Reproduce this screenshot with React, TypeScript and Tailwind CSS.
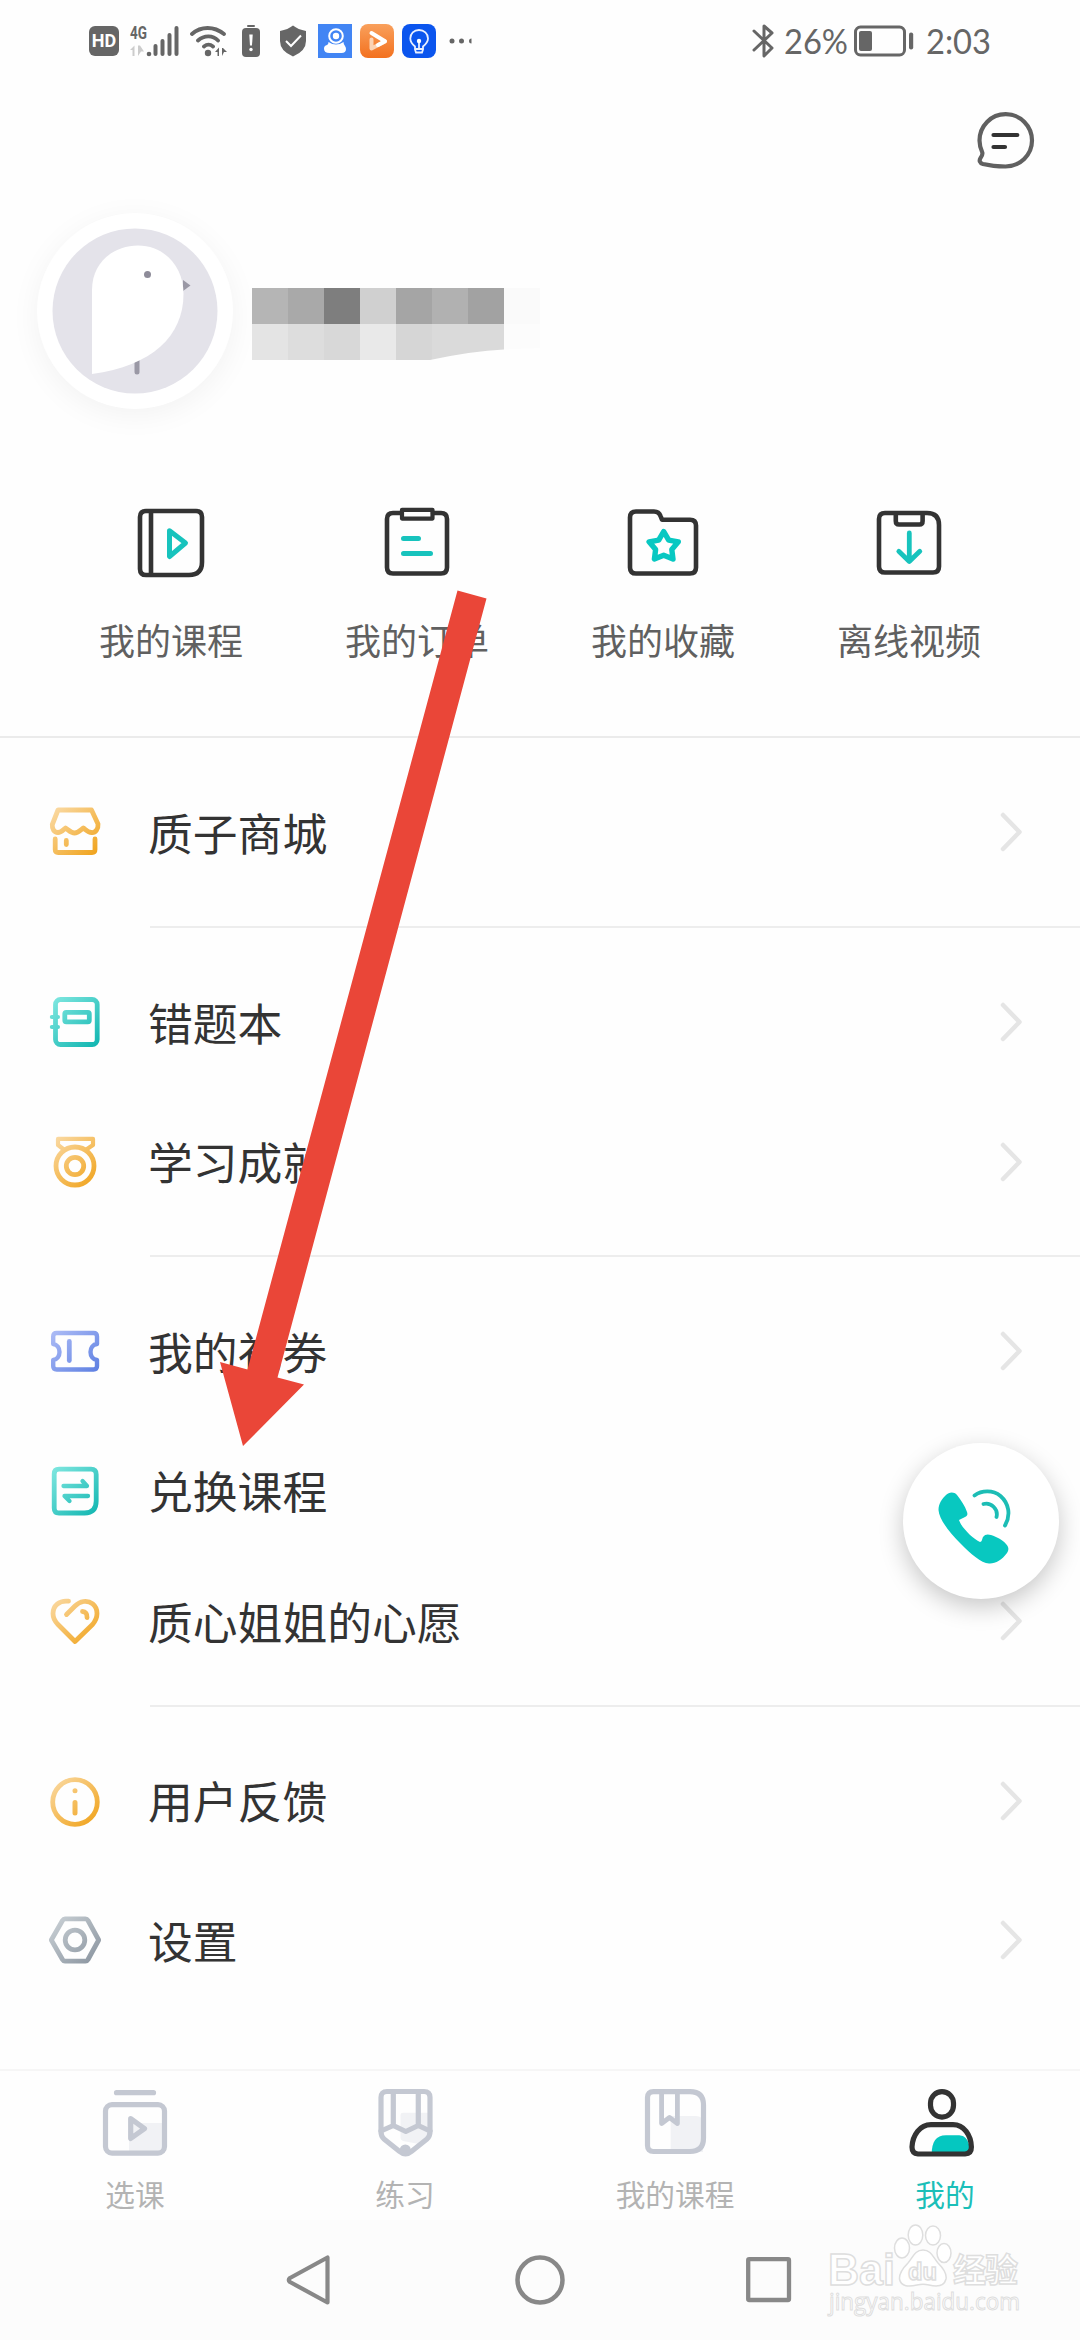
import React from 'react';

type IconProps = { className?: string };

const shade = (id: string, from: string, to: string) => (
  <defs>
    <linearGradient id={id} gradientUnits="userSpaceOnUse" x1="6" y1="4" x2="48" y2="50">
      <stop offset="0" stopColor={from} />
      <stop offset="1" stopColor={to} />
    </linearGradient>
  </defs>
);

const RowSvg: React.FC<{ id: string; from: string; to: string; children: React.ReactNode }> = ({ id, from, to, children }) => (
  <svg viewBox="0 0 54 54" className="w-[54px] h-[54px] shrink-0" fill="none" stroke={`url(#${id})`} strokeWidth="4.800" strokeLinecap="round" strokeLinejoin="round">
    {shade(id, from, to)}
    {children}
  </svg>
);

const orange = { from: '#fad9a2', to: '#f0a31c' };
const teal = { from: '#7de6df', to: '#14b7b2' };
const blue = { from: '#aebdf6', to: '#5d7fe2' };
const grey = { from: '#c9d0d5', to: '#8b95a0' };

const StoreIcon = () => (
  <RowSvg id="store" {...orange}>
    <path d="M10 5H43.500L50 19C50.500 24 47.500 28 43.500 27.500C40 27.500 38 25 35.300 23C32.500 25 30 28 26.500 28C23 28 20.500 25 17.500 23C15 25 13 27.500 10 27.500C6 27.500 4 24 4.300 19.500Z" />
    <path d="M7.200 34V44.500Q7.200 47.500 10.200 47.500H44Q47 47.500 47 44.500V34M18.300 35.500V39.500" />
  </RowSvg>
);

const NotebookIcon = () => (
  <RowSvg id="notebook" {...teal}>
    <rect x="7.500" y="4.500" width="41.700" height="45" rx="5" />
    <rect x="16.800" y="17.300" width="24.500" height="9.500" rx="1.500" />
    <path d="M3.800 22H10M3.800 32H10" strokeWidth="4" />
  </RowSvg>
);

const MedalIcon = () => (
  <RowSvg id="medal" {...orange}>
    <path d="M16.500 15L10 10V3.900H45V10L37.500 15" strokeWidth="4.200" />
    <circle cx="27" cy="31" r="19" />
    <circle cx="27" cy="31" r="8.700" />
  </RowSvg>
);

const TicketIcon = () => (
  <RowSvg id="ticket" {...blue}>
    <path d="M5.200 20V12.500Q5.200 9 8.700 9H45.500Q49 9 49 12.500V20C45 20.500 42.500 24 42.500 28C42.500 32 45 35.500 49 36V42Q49 45.500 45.500 45.500H8.700Q5.200 45.500 5.200 42V36C9 35.500 11.500 32 11.500 28C11.500 24 9 20.500 5.200 20Z" strokeWidth="4.400" />
    <path d="M21.300 17.500V36.500" />
  </RowSvg>
);

const ExchangeIcon = () => (
  <RowSvg id="exchange" {...teal}>
    <path d="M11 5.200H43Q48.200 5.200 48.200 10.400V37Q48.200 49 36.500 49H11Q6.200 49 6.200 44V10Q6.200 5.200 11 5.200Z" />
    <path d="M15.500 22H39L34.500 17M40 32H16.500L21.500 37" strokeWidth="4.300" />
  </RowSvg>
);

const HeartIcon = () => (
  <RowSvg id="heart" {...orange}>
    <path d="M20.500 7.200C11 6 5 12 5 19.500C5 24 7 27.500 10 30.500L27 47.500L44.500 30.500C47 27.500 49 24 49 19.500C49 11 42 6.500 35.500 7.500C32 8 29.500 9.500 27 12L18.500 20.500" />
    <path d="M34.500 17.500C37.500 17.500 39.300 20 39 23.500" />
  </RowSvg>
);

const InfoIcon = () => (
  <RowSvg id="info" {...orange}>
    <circle cx="27" cy="28" r="22.300" />
    <path d="M27 28.500V39M27 16.700V16.800" strokeWidth="5" />
  </RowSvg>
);

const SettingsIcon = () => (
  <RowSvg id="settings" {...grey}>
    <path d="M3.300 27L14.500 7.500Q15.500 5.900 17 5.900H37.500Q39 5.900 40 7.500L50.700 27L40 46.500Q39 48.200 37.500 48.200H17Q15.500 48.200 14.500 46.500Z" />
    <circle cx="27" cy="27" r="9.800" />
  </RowSvg>
);

const ShortcutSvg: React.FC<{ children: React.ReactNode }> = ({ children }) => (
  <svg viewBox="0 0 72 72" className="w-[72px] h-[72px]" fill="none" stroke="#333" strokeWidth="4.600" strokeLinecap="round" strokeLinejoin="round">
    {children}
  </svg>
);

const CourseIcon = () => (
  <ShortcutSvg>
    <path d="M11 4H61Q67 4 67 10V55Q67 68 54 68H11Q5 68 5 62V10Q5 4 11 4ZM16 4V68" />
    <path d="M34.500 23.700L50.500 36L34.500 49.500Z" stroke="#17c3bd" strokeWidth="5" />
  </ShortcutSvg>
);

const OrderIcon = () => (
  <ShortcutSvg>
    <path d="M20 6H12Q6 6 6 12V60.500Q6 66.500 12 66.500H60Q66 66.500 66 60.500V12Q66 6 60 6H52" />
    <rect x="21" y="2.900" width="30.500" height="8.700" strokeWidth="4.200" />
    <path d="M22.500 31.400H37.500M22.500 46.400H49.500" stroke="#17c3bd" strokeWidth="5" />
  </ShortcutSvg>
);

const FavoriteIcon = () => (
  <ShortcutSvg>
    <path d="M9 4.500H27Q32 4.500 33.500 9L35 12.700H63Q69 12.700 69 18.500V60.500Q69 66.500 63 66.500H9Q3 66.500 3 60.500V10.500Q3 4.500 9 4.500Z" />
    <path d="M36.700 24.500L41.700 33.100L51.300 34.800L44.800 42.600L46 52L36.700 48.300L27.400 52L28.600 42.600L22.100 34.800L31.700 33.100Z" stroke="#08c8c2" strokeWidth="5.400" />
  </ShortcutSvg>
);

const OfflineIcon = () => (
  <ShortcutSvg>
    <path d="M12 6H54Q66 6 66 18V59.500Q66 65.500 60 65.500H12Q6 65.500 6 59.500V12Q6 6 12 6ZM22.800 6V14Q22.800 17.500 26 17.500H46.500Q49.600 17.500 49.600 14V6" />
    <path d="M36.300 26V54.500M25.800 44.300L36.300 54.500L46.800 44.300" stroke="#17c3bd" strokeWidth="4.800" />
  </ShortcutSvg>
);

const TabSvg: React.FC<{ color: string; children: React.ReactNode }> = ({ color, children }) => (
  <svg viewBox="0 0 72 72" className="w-[72px] h-[72px]" fill="none" stroke={color} strokeWidth="5.200" strokeLinecap="round" strokeLinejoin="round">
    {children}
  </svg>
);

const PickTabIcon = () => (
  <TabSvg color="#c4c8d2">
    <path d="M30 36H66V66H30Z" fill="#f1f2f5" stroke="none" />
    <path d="M17.500 5.700H54.500" />
    <rect x="6.500" y="17.600" width="59" height="48.500" rx="6.500" />
    <path d="M31.700 31.700L45.500 41.700L31.700 51.500Z" fill="#f1f2f5" />
  </TabSvg>
);

const PracticeTabIcon = () => (
  <TabSvg color="#c4c8d2">
    <path d="M31.500 28Q31.500 25.700 34 25.700H61V48L50 57L34 54Q31.500 53 31.500 51Z" fill="#f1f2f5" stroke="none" />
    <path d="M18 4.500H55Q61 4.500 61 10.500V45Q61 49 58 52L43 64Q36.500 69.500 30 64L15 52Q12 49 12 45V10.500Q12 4.500 18 4.500Z" />
    <path d="M24.300 5V38M49.300 5V38M12 44L24.300 38.500L36.800 44.500L49.300 38.500L61 44" />
    <circle cx="36.300" cy="63" r="5.500" fill="#c4c8d2" stroke="none" />
  </TabSvg>
);

const CourseTabIcon = () => (
  <TabSvg color="#c4c8d2">
    <path d="M31.700 29H57Q64 29 64 36V65H31.700Z" fill="#f1f2f5" stroke="none" />
    <path d="M14.500 4.600H51Q64.500 4.600 64.500 18V51Q64.500 64.500 51 64.500H14.500Q8.500 64.500 8.500 58.500V10.600Q8.500 4.600 14.500 4.600Z" />
    <path d="M22.600 5V36.500L30.500 30.500L38.400 36.500V5" strokeWidth="4.800" />
  </TabSvg>
);

const MineTabIcon = () => (
  <TabSvg color="#333">
    <path d="M22.700 67C22.700 55 27 48.300 37 48.300H49C56 48.300 60 52 62 67Z" fill="#05c7c0" stroke="none" />
    <rect x="21.500" y="4.600" width="23" height="25.500" rx="11.500" />
    <path d="M9 67Q3 66.500 3 60C3.500 48 11 37.600 22 37.600H44C55 37.600 62 48 62.400 60Q62.500 66.500 56 67Z" />
  </TabSvg>
);

const ChevronRight: React.FC<IconProps> = ({ className }) => (
  <svg viewBox="0 0 24 42" className={className} fill="none" stroke="#e5e5e5" strokeWidth="4.500" strokeLinecap="round" strokeLinejoin="round">
    <path d="M4 4L20.500 21L4 38" />
  </svg>
);

const shortcuts = [
  { label: '我的课程', icon: CourseIcon },
  { label: '我的订单', icon: OrderIcon },
  { label: '我的收藏', icon: FavoriteIcon },
  { label: '离线视频', icon: OfflineIcon },
];

const menu = [
  { pad: 'py-6', items: [{ label: '质子商城', icon: StoreIcon, height: 'h-[140px]' }] },
  {
    pad: 'py-6',
    items: [
      { label: '错题本', icon: NotebookIcon, height: 'h-[140px]' },
      { label: '学习成就', icon: MedalIcon, height: 'h-[139px]' },
    ],
  },
  {
    pad: 'pt-6 pb-[23px]',
    items: [
      { label: '我的礼券', icon: TicketIcon, height: 'h-[140px]' },
      { label: '兑换课程', icon: ExchangeIcon, height: 'h-[139px]' },
      { label: '质心姐姐的心愿', icon: HeartIcon, height: 'h-[122px]' },
    ],
  },
  {
    pad: 'py-6',
    items: [
      { label: '用户反馈', icon: InfoIcon, height: 'h-[139px]' },
      { label: '设置', icon: SettingsIcon, height: 'h-[140px]' },
    ],
  },
];

const tabs = [
  { label: '选课', icon: PickTabIcon, active: false },
  { label: '练习', icon: PracticeTabIcon, active: false },
  { label: '我的课程', icon: CourseTabIcon, active: false },
  { label: '我的', icon: MineTabIcon, active: true },
];

const StatusBar = () => (
  <div className="h-20 pl-[89px] pr-[88px] pt-0.5 flex items-center justify-between text-[#666]">
    <div className="flex items-center">
      <div className="w-[30px] h-[30px] rounded-md bg-[#666] text-white font-['Roboto'] font-bold text-[18px] leading-none flex items-center justify-center">
        HD
      </div>
      <svg viewBox="0 0 50 32" className="ml-[11px] w-[50px] h-8 overflow-visible" fill="#666">
        <text x="0" y="14" fontFamily="Roboto, sans-serif" fontWeight="700" fontSize="18" textLength="17" lengthAdjust="spacingAndGlyphs">4G</text>
        <path d="M0 25L4.500 20.500V31H2.500V25ZM8 20.500H10L14 26.500H11L8 31Z" fill="#ccc" />
        <circle cx="19" cy="29" r="2.300" />
        <rect x="23.500" y="19" width="4" height="12" rx="2" />
        <rect x="30.500" y="14" width="4" height="17" rx="2" />
        <rect x="37.500" y="8" width="4" height="23" rx="2" />
        <rect x="44.500" y="1" width="4" height="30" rx="2" />
      </svg>
      <svg viewBox="0 0 38 32" className="ml-2.5 w-[38px] h-8" fill="none" stroke="#666" strokeWidth="3.800" strokeLinecap="round">
        <path d="M2 9C11 1 24 1 34 9M8 15.500C14 10 23 10 28 15.500M14 21.500C17 19 20 19 23 21.500" />
        <circle cx="18" cy="28" r="3.200" fill="#666" stroke="none" />
        <path d="M25 27L29 22.500V31H27.500V27ZM32 23H33L37 27H34L32 31Z" fill="#666" stroke="none" />
      </svg>
      <svg viewBox="0 0 18 32" className="ml-3.5 w-[18px] h-8" fill="#666">
        <rect x="5" y="0" width="8" height="2" rx="1" />
        <rect x="0" y="3" width="18" height="29" rx="4" />
        <path d="M7.300 9.500H10.700L10 20.500H8Z" fill="#fff" />
        <circle cx="9" cy="24.500" r="1.700" fill="#fff" />
      </svg>
      <svg viewBox="0 0 26 32" className="ml-5 w-[26px] h-8">
        <path d="M13 0.500Q18 4.500 26 6V16Q26 26 13 31.500Q0 26 0 16V6Q8 4.500 13 0.500Z" fill="#666" />
        <path d="M6 16L11 21L21 10.500" fill="none" stroke="#fff" strokeWidth="2" />
      </svg>
      <svg viewBox="0 0 34 34" className="ml-3 w-[34px] h-[34px]">
        <path d="M0 0H34V34H0Z" fill="#4285f4" />
        <circle cx="18" cy="12" r="6.800" fill="none" stroke="#fff" strokeWidth="2" />
        <circle cx="18" cy="12" r="3.200" fill="#fff" />
        <path d="M10.500 18Q18 23 25.500 18Q25.500 20.500 27 22Q28 23.500 28 25Q28 29 23.500 29H11.500Q6 29 6 24.800Q6 21.500 9 21Q10.500 20.500 10.500 18Z" fill="#fff" />
      </svg>
      <svg viewBox="0 0 34 34" className="ml-2 w-[34px] h-[34px]">
        <defs>
          <linearGradient id="video" x1="0" y1="0" x2="0" y2="1">
            <stop offset="0" stopColor="#f9a05c" />
            <stop offset="1" stopColor="#f3711f" />
          </linearGradient>
        </defs>
        <rect width="34" height="34" rx="8" fill="url(#video)" />
        <path d="M11.500 15.500V24.500L25 17.500" fill="none" stroke="#fbd3b4" strokeWidth="4" strokeLinecap="round" strokeLinejoin="round" />
        <path d="M11.500 9L25 17.200L18 21" fill="none" stroke="#fff" strokeWidth="4" strokeLinecap="round" strokeLinejoin="round" />
      </svg>
      <svg viewBox="0 0 34 34" className="ml-2 w-[34px] h-[34px]" fill="none" stroke="#e8efff" strokeWidth="1.800">
        <rect width="34" height="34" rx="8" fill="#0b55ee" stroke="none" />
        <path d="M13 25V22.500C10 20 8.300 18 8.300 14.500C8.300 9.500 12 6 17 6S26 9.500 26 14.500C26 18 24 20 21 22.500V25ZM13 25.500L14 28.500H20L21 25.500M17 17V24" />
        <circle cx="17" cy="17" r="2.200" fill="#fff" stroke="none" />
      </svg>
      <svg viewBox="0 0 24 6" className="ml-[13px] w-6 h-1.5" fill="#666">
        <circle cx="3" cy="3" r="2.500" />
        <circle cx="12.500" cy="3" r="2.500" />
        <path d="M22.500 0.500V5.500A2.500 2.500 0 0 1 22.500 0.500Z" />
      </svg>
    </div>

    <div className="flex items-center">
      <svg viewBox="0 0 22 34" className="w-[22px] h-[34px]" fill="none" stroke="#666" strokeWidth="3" strokeLinejoin="round" strokeLinecap="round">
        <path d="M2 7L20 24L12 32V2L20 9L2 26" />
      </svg>
      <svg viewBox="0 0 64 34" className="ml-2.5 w-16 h-[34px] overflow-visible" fill="#666">
        <text x="0" y="30" fontFamily="Lato, sans-serif" fontSize="35" textLength="64" lengthAdjust="spacingAndGlyphs">26%</text>
      </svg>
      <svg viewBox="0 0 60 32" className="ml-[6px] w-[60px] h-8" fill="none" stroke="#666">
        <rect x="1.500" y="2" width="49" height="28" rx="5" strokeWidth="3" />
        <rect x="5" y="6" width="13" height="20" rx="2" fill="#666" stroke="none" />
        <rect x="55" y="7.500" width="4.200" height="17" rx="2" fill="#666" stroke="none" />
      </svg>
      <svg viewBox="0 0 66 34" className="ml-3 w-[66px] h-[34px] overflow-visible" fill="#666">
        <text x="0" y="30" fontFamily="Lato, sans-serif" fontSize="35" textLength="65" lengthAdjust="spacingAndGlyphs">2:03</text>
      </svg>
    </div>
  </div>
);

const Avatar = () => (
  <div className="w-[196px] h-[196px] rounded-full bg-white shadow-[0_6px_30px_rgba(0,0,0,0.05)] flex items-center justify-center">
    <svg viewBox="0 0 166 166" className="w-[166px] h-[166px]">
      <circle cx="83" cy="83" r="82.500" fill="#e4e3ea" />
      <path d="M85 125V144" stroke="#9a98a5" strokeWidth="5" strokeLinecap="round" />
      <path d="M131 52L138.500 57.500L131 63Z" fill="#9a98a5" />
      <path d="M40 146V62C40 34 62 17.500 86 17.500C112 17.500 131.500 38 131.500 66C131.500 108 100 138 40 146Z" fill="#fff" />
      <circle cx="95.500" cy="46.500" r="3.500" fill="#8e8c99" />
    </svg>
  </div>
);

const topTiles = ['#b5b5b5', '#a9a9a9', '#7e7e7e', '#d0d0d0', '#a5a5a5', '#b1b1b1', '#a2a2a2', '#fafafa'];
const bottomTiles = ['#e4e4e4', '#dddddd', '#d8d8d8', '#e9e9e9', '#d6d6d6', '#dadada', '#dadada', '#fcfcfc'];

const MaskedName = () => (
  <svg viewBox="0 0 288 72" className="w-[288px] h-[72px]" shapeRendering="crispEdges">
    {topTiles.map((c, i) => (
      <rect key={i} x={i * 36} y="0" width="36" height="36" fill={c} />
    ))}
    {bottomTiles.map((c, i) => (
      <rect key={i} x={i * 36} y="36" width="36" height="36" fill={c} />
    ))}
    <path d="M178 72Q220 63 252 61.500L288 60V72Z" fill="#fefefe" shapeRendering="auto" />
  </svg>
);

const App: React.FC = () => {
  return (
    <div className="relative w-[1080px] h-[2340px] overflow-hidden bg-[#fefefe] flex flex-col font-['Noto_Sans_CJK_SC',sans-serif]">
      <StatusBar />

      {/* Messages */}
      <div className="h-[133px] pt-[30px] pr-[45px] flex justify-end">
        <svg viewBox="0 0 60 60" className="w-[60px] h-[60px]" fill="none" stroke="#606060" strokeWidth="4.200" strokeLinecap="round" strokeLinejoin="round">
          <path d="M7.300 42.500C5.500 38.500 4.500 35 4.500 30.500C4.500 16 16 4.200 30.700 4.200S57 16 57 30.500S45 56.500 30.500 56.500C22 56.500 14 55.500 8 54C4.500 53 4 50.500 5.500 48C7 46 7.800 44.500 7.300 42.500Z" />
          <path d="M18.500 25H42.300M18.500 37H30" stroke="#333" />
        </svg>
      </div>

      {/* Profile */}
      <div className="h-[294px] pl-[37px] flex items-start">
        <Avatar />
        <div className="ml-[19px] pt-[75px]">
          <MaskedName />
        </div>
      </div>

      {/* Shortcuts */}
      <div className="h-[231px] px-12 grid grid-cols-4 border-b-2 border-[#ebebeb]">
        {shortcuts.map((item) => (
          <div key={item.label} className="flex flex-col items-center">
            <item.icon />
            <span className="mt-[33px] text-4xl leading-[54px] text-[#606060]">{item.label}</span>
          </div>
        ))}
      </div>

      {/* Menu */}
      <div className="h-[1331px]">
        {menu.map((group, index) => (
          <React.Fragment key={index}>
            {index > 0 && <div className="ml-[150px] h-0.5 bg-[#ededed]"></div>}
            <div className={group.pad}>
              {group.items.map((item) => (
                <div key={item.label} className={`${item.height} pl-12 pr-[57px] flex items-center`}>
                  <item.icon />
                  <span className="ml-[46px] flex-1 text-[44.800px] leading-none text-[#333]">{item.label}</span>
                  <ChevronRight className="w-6 h-[42px]" />
                </div>
              ))}
            </div>
          </React.Fragment>
        ))}
      </div>

      {/* Tab bar */}
      <div className="h-[151px] pt-[16px] grid grid-cols-4 bg-[#fefefe] border-t-2 border-[#f6f6f6]">
        {tabs.map((tab) => (
          <div key={tab.label} className="flex flex-col items-center">
            <tab.icon />
            <span className={`mt-[13px] text-[29.700px] leading-[44px] ${tab.active ? 'text-[#1bbfb8]' : 'text-[#b3b3b3]'}`}>
              {tab.label}
            </span>
          </div>
        ))}
      </div>

      {/* System navigation */}
      <div className="h-[120px] pl-[284px] bg-[#fcfcfc] flex items-center">
        <svg viewBox="0 0 52 52" className="w-[52px] h-[52px]" fill="none" stroke="#888" strokeWidth="4.200" strokeLinejoin="round">
          <path d="M43.500 3.500V48.500L6 28Q3.500 26 6 24Z" />
        </svg>
        <svg viewBox="0 0 52 52" className="ml-[178px] w-[52px] h-[52px]" fill="none" stroke="#888" strokeWidth="4.500">
          <circle cx="26" cy="26" r="22.500" />
        </svg>
        <svg viewBox="0 0 52 52" className="ml-[177px] w-[52px] h-[52px]" fill="none" stroke="#888" strokeWidth="4.300" strokeLinejoin="round">
          <rect x="5.200" y="5.200" width="40.800" height="40.800" rx="1" />
        </svg>
      </div>

      {/* Floating call button */}
      <div className="absolute left-[903px] top-[1443px] w-[156px] h-[156px] rounded-full bg-white shadow-[0_8px_24px_rgba(0,0,0,0.22)]">
        <svg viewBox="0 0 156 156" className="w-full h-full" fill="none" stroke="#1cbdb5" strokeWidth="3.800" strokeLinecap="round">
          <path
            d="M43 52C46 49 51 48.500 54 52C58 57 62 63 64 69C65 72 64 73 62 74L56 77C58 84 70 96 77 99C79 99 79 96 80 94C82 91 85 91 88 92C94 94 100 97 103 101C106 104 106 107 104 110C99 117 92 121 86 120.500C78 120 68 111 58 101C46 89 36 76 35.500 67C35.500 61 39 55.500 43 52Z"
            fill="#08c8c0"
            stroke="none"
          />
          <path d="M71.500 52.500C79 47 90 47 97.500 53C106 60.500 108 72 102 82.500M80.500 61C88 59 95.500 66 93.500 74" />
        </svg>
      </div>

      {/* Pointer arrow */}
      <svg viewBox="0 0 270 860" className="absolute left-[218px] top-[588px] w-[270px] h-[860px]">
        <path d="M239.500 2.500L268.500 10.500L59.500 789.500L86 796.500L25 858L2 774L29.500 781.500Z" fill="#ea4638" />
      </svg>

      {/* Watermark */}
      <svg viewBox="0 0 200 104" className="absolute left-[828px] top-[2218px] w-[200px] h-[104px] overflow-visible" fill="#fff" stroke="#dedede" strokeWidth="1.500">
        <text x="0" y="67" fontFamily="Liberation Sans, sans-serif" fontWeight="700" fontSize="45" textLength="67" lengthAdjust="spacingAndGlyphs">Bai</text>
        <ellipse cx="74" cy="30" rx="7.500" ry="10" />
        <ellipse cx="87.500" cy="17" rx="7.300" ry="10" />
        <ellipse cx="105" cy="17.500" rx="7.500" ry="9.500" />
        <ellipse cx="116" cy="35" rx="7" ry="9.500" />
        <path d="M95 32C103 32 105 39 110 45C116 51 119 56 118 61C116 69 109 69 101 67C97 66 93 66 89 67C81 69 73 69 71.500 61C71 55 75 50 80 45C85 39 87 32 95 32Z" />
        <text x="80" y="62" fontFamily="Liberation Sans, sans-serif" fontWeight="700" fontSize="24" textLength="29" lengthAdjust="spacingAndGlyphs">du</text>
        <text x="125" y="64" fontFamily="Noto Sans CJK SC, sans-serif" fontWeight="700" fontSize="33" textLength="65">经验</text>
        <text x="1" y="92" fontFamily="Open Sans, sans-serif" fontSize="24" strokeWidth="1" textLength="191" lengthAdjust="spacingAndGlyphs">jingyan.baidu.com</text>
      </svg>
    </div>
  );
};

export default App;
